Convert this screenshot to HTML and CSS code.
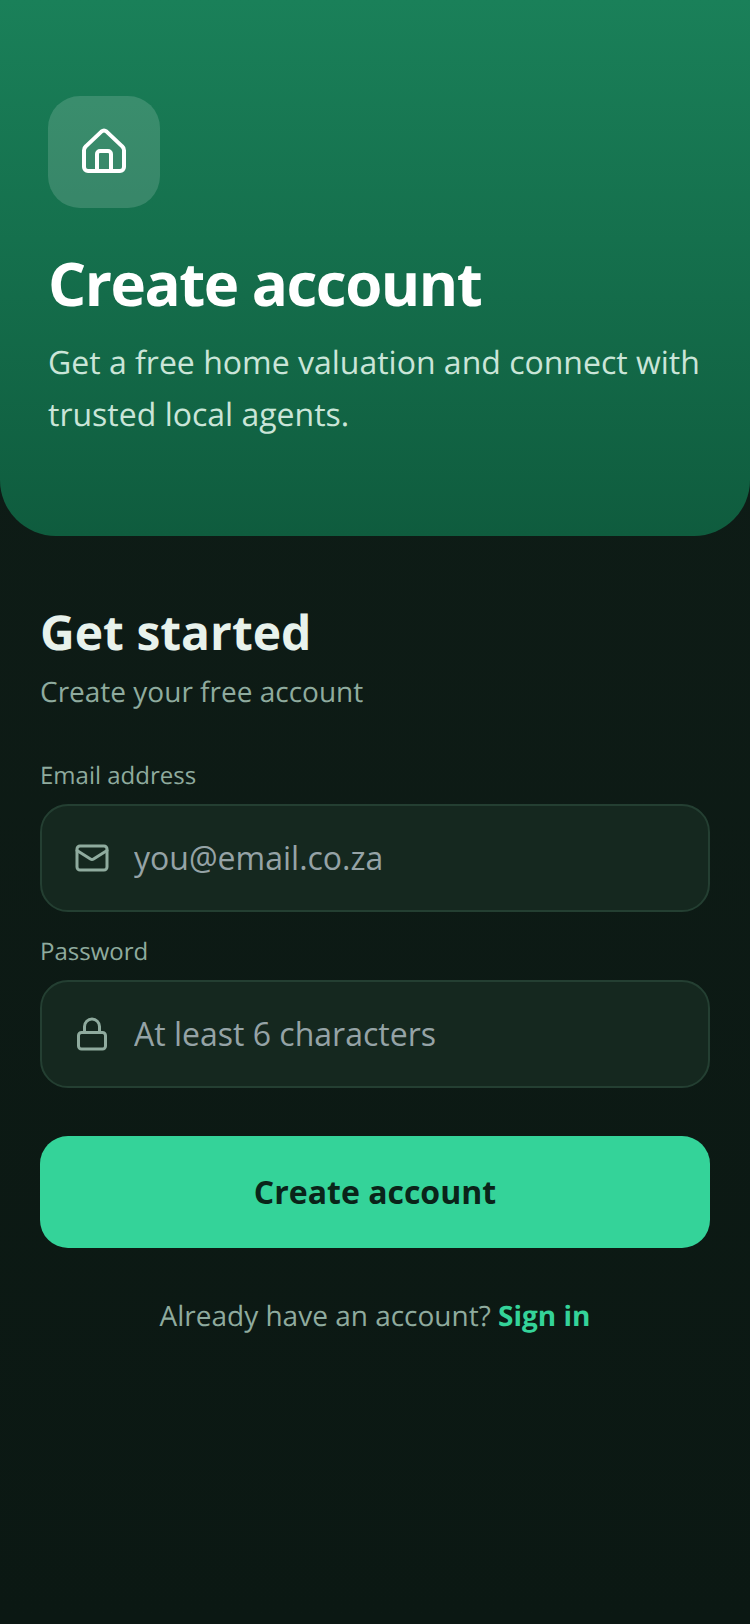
FILE: index.html
```html
<!DOCTYPE html>
<html lang="en">
<head>
    <meta charset="UTF-8">
    <meta name="viewport" content="width=device-width, initial-scale=1.0">
    <title>Create account</title>
    <link rel="stylesheet" href="styles.css">
</head>
<body>
    <header class="hero">
        <div class="hero-icon">
            <svg width="48" height="48" viewBox="0 0 24 24" fill="none" stroke="#fff" stroke-width="2" stroke-linecap="round" stroke-linejoin="round">
                <path d="M2 11.2c0-.8.3-1.5.9-2L10.700 1.800a2 2 0 0 1 2.600 0l7.800 7.400c.6.5.9 1.200.9 2V19.500a2 2 0 0 1-2 2H4a2 2 0 0 1-2-2z"/>
                <path d="M8.500 21.500V13a1.500 1.500 0 0 1 1.500-1.500h4A1.500 1.500 0 0 1 15.500 13v8.500"/>
            </svg>
        </div>
        <h1>Create account</h1>
        <p>Get a free home valuation and connect with trusted local agents.</p>
    </header>

    <main class="form-wrap">
        <h2>Get started</h2>
        <p class="subtitle">Create your free account</p>

        <form>
            <label class="field-label" for="email">Email address</label>
            <div class="field">
                <svg width="36" height="36" viewBox="0 0 24 24" fill="none" stroke="#8fab9e" stroke-width="2" stroke-linecap="round" stroke-linejoin="round">
                    <rect x="2" y="4" width="20" height="16" rx="2"/>
                    <path d="M22 7l-8.970 5.700a1.940 1.940 0 0 1-2.060 0L2 7"/>
                </svg>
                <input id="email" type="email" placeholder="you@email.co.za">
            </div>

            <label class="field-label" for="password">Password</label>
            <div class="field">
                <svg width="36" height="36" viewBox="0 0 24 24" fill="none" stroke="#8fab9e" stroke-width="2" stroke-linecap="round" stroke-linejoin="round">
                    <rect x="3" y="11" width="18" height="11" rx="2"/>
                    <path d="M7 11V7a5 5 0 0 1 10 0v4"/>
                </svg>
                <input id="password" type="password" placeholder="At least 6 characters">
            </div>

            <button type="button" class="submit">Create account</button>
        </form>

        <p class="signin">Already have an account? <a href="#">Sign in</a></p>
    </main>
</body>
</html>
```

FILE: styles.css
```css
* {
    box-sizing: border-box;
}
body {
    margin: 0;
    min-height: 1624px;
    font-family: 'Open Sans', 'Noto Sans', sans-serif;
    text-rendering: geometricPrecision;
    background: linear-gradient(180deg, #0f1d17 0%, #0b1813 100%);
}
.hero {
    height: 536px;
    padding: 96px 48px 0;
    background: linear-gradient(180deg, #1a8059 0%, #0f5c3e 100%);
    border-radius: 0 0 56px 56px;
}
.hero-icon {
    width: 112px;
    height: 112px;
    border-radius: 32px;
    background: rgba(255, 255, 255, 0.15);
    display: flex;
    align-items: center;
    justify-content: center;
}
.hero h1 {
    margin: 33px 0 0;
    font-size: 60px;
    line-height: 84px;
    font-weight: 700;
    letter-spacing: -1.5px;
    color: #fff;
}
.hero p {
    margin: 12px 0 0;
    font-size: 32px;
    line-height: 52px;
    color: #cae5d8;
}
.form-wrap {
    padding: 65px 40px 0;
}
.form-wrap h2 {
    margin: 0;
    font-size: 48px;
    line-height: 64px;
    font-weight: 700;
    color: #e8f2ec;
}
.subtitle {
    margin: 7px 0 0;
    font-size: 28px;
    line-height: 40px;
    color: #8fab9e;
}
form {
    margin-top: 47px;
}
.field-label {
    display: block;
    margin-bottom: 11px;
    font-size: 24px;
    line-height: 34px;
    color: #8fab9e;
}
.field {
    height: 108px;
    margin-bottom: 23px;
    padding: 0 32px;
    display: flex;
    align-items: center;
    gap: 24px;
    background: #15281f;
    border: 2px solid #243f32;
    border-radius: 28px;
}
.field input {
    flex: 1;
    min-width: 0;
    padding: 0 0 2px;
    border: 0;
    outline: 0;
    background: transparent;
    font-family: inherit;
    font-size: 32px;
    color: #e8f2ec;
}
.field input::placeholder {
    color: #95a3a6;
    opacity: 1;
}
.submit {
    display: block;
    width: 100%;
    height: 112px;
    margin-top: 48px;
    padding: 0 0 2px;
    border: 0;
    border-radius: 28px;
    background: #34d399;
    font-family: inherit;
    font-size: 32px;
    font-weight: 700;
    color: #0a2419;
}
.signin {
    margin: 48px 0 0;
    text-align: center;
    font-size: 28px;
    line-height: 40px;
    color: #8fab9e;
}
.signin a {
    color: #34d399;
    font-weight: 700;
    text-decoration: none;
}
```
